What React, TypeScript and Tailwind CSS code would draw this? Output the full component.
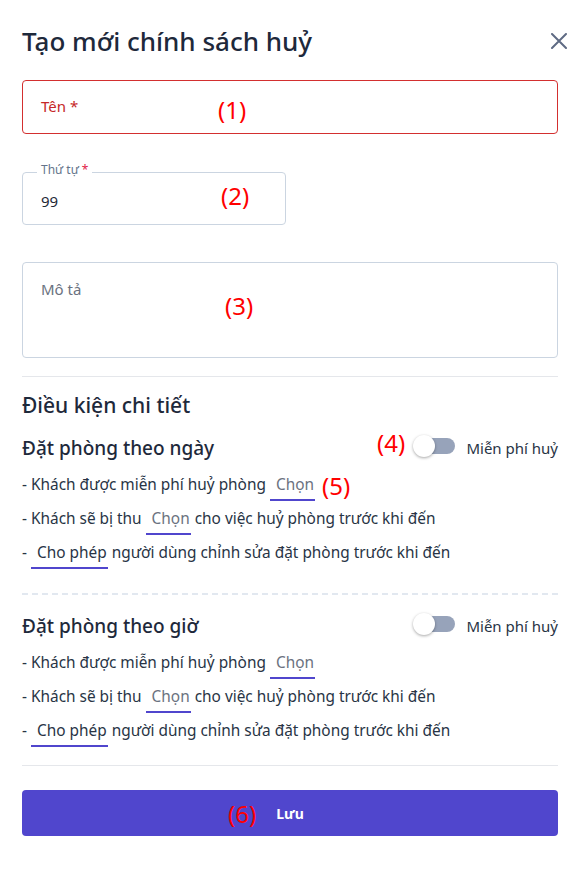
import React from "react";

function Select({ children, dark = false }: { children: React.ReactNode; dark?: boolean }) {
  return (
    <span
      className={`inline-block border-b-2 border-[#5046cd] pb-[4px] pl-[6px] pr-[1px] leading-[20px] ${
        dark ? "text-[#283445]" : "text-[#6b7280]"
      }`}
    >
      {children}
    </span>
  );
}

function Note({ children, className }: { children: React.ReactNode; className: string }) {
  return (
    <span
      className={`pointer-events-none absolute text-[24px] font-normal leading-[30px] text-[#ff0000] ${className}`}
    >
      {children}
    </span>
  );
}

function Switch() {
  return (
    <div className="relative h-[22px] w-[42px] shrink-0">
      <div className="absolute left-[5px] right-0 top-[3px] h-[16px] rounded-full bg-[#97a3ba]" />
      <div className="absolute left-0 top-0 h-[22px] w-[22px] rounded-full bg-white shadow-[0_1px_3px_rgba(0,0,0,0.35)]" />
    </div>
  );
}

function Section({ title, note }: { title: string; note?: boolean }) {
  return (
    <div>
      <div className="relative flex h-[26px] items-center justify-between">
        <h3 className="text-[19px] font-medium leading-[26px] text-[#1e293b]">{title}</h3>
        {note && <Note className="left-[355px] top-[-7px]">(4)</Note>}
        <div className="flex items-center gap-[11px]">
          <div className="-mt-[5px]">
            <Switch />
          </div>
          <span className="text-[15px] leading-[20px] text-[#283445]">Miễn phí huỷ</span>
        </div>
      </div>
      <div className="mt-[7px] text-[15.4px] text-[#283445]">
        <div className="relative h-[34px] leading-[34px]">
          - Khách được miễn phí huỷ phòng <Select>Chọn</Select>
          {note && <Note className="left-[300px] top-[3px]">(5)</Note>}
        </div>
        <div className="h-[34px] leading-[34px]">
          - Khách sẽ bị thu <Select>Chọn</Select> cho việc huỷ phòng trước khi đến
        </div>
        <div className="h-[34px] leading-[34px]">
          - <Select dark>Cho phép</Select> người dùng chỉnh sửa đặt phòng trước khi đến
        </div>
      </div>
    </div>
  );
}

export default function App() {
  return (
    <div className="min-h-[869px] w-full bg-white px-[22px] pt-[23px] font-['Noto_Sans',sans-serif] text-[#283445]">
      <div className="flex h-[36px] items-center justify-between">
        <h1 className="text-[26px] font-medium leading-[36px] text-[#1e293b]">Tạo mới chính sách huỷ</h1>
        <svg width="16" height="16" viewBox="0 0 16 16" className="-mr-[9px]" fill="none">
          <path d="M1 1 L15 15 M15 1 L1 15" stroke="#5f6b84" strokeWidth="2" strokeLinecap="round" />
        </svg>
      </div>

      <div className="relative mt-[21px] h-[54px] rounded-[4px] border border-[#d32f2f] px-[18px] pt-[13px]">
        <span className="text-[15px] leading-[20px] text-[#c62828]">Tên *</span>
        <Note className="left-[195px] top-[14px]">(1)</Note>
      </div>

      <div className="relative mt-[38px] h-[53px] w-[264px] rounded-[4px] border border-[#cbd5e1] px-[18px] pt-[16px]">
        <span className="absolute left-[14px] top-[-10px] bg-white px-[4px] text-[12px] leading-[14px] text-[#64748b]">
          Thứ tự <span className="text-[#e11d48]">*</span>
        </span>
        <span className="text-[15px] leading-[20px] text-[#1f2937]">99</span>
        <Note className="left-[198px] top-[8px]">(2)</Note>
      </div>

      <div className="relative mt-[37px] h-[96px] rounded-[4px] border border-[#cbd5e1] px-[18px] pt-[14px]">
        <span className="text-[15px] leading-[20px] text-[#6b7280]">Mô tả</span>
        <Note className="left-[202px] top-[28px]">(3)</Note>
      </div>

      <div className="mt-[18px] h-px bg-[#e5e7eb]" />

      <h2 className="mt-[14px] text-[21px] font-medium leading-[28px] text-[#1e293b]">Điều kiện chi tiết</h2>

      <div className="mt-[16px]">
        <Section title="Đặt phòng theo ngày" note />
      </div>

      <div className="mt-[23px] border-t-2 border-dashed border-[#e2e8f0]" />

      <div className="mt-[18px]">
        <Section title="Đặt phòng theo giờ" />
      </div>

      <div className="mt-[17px] h-px bg-[#e5e7eb]" />

      <button className="relative mt-[24px] flex h-[46px] w-full items-center justify-center rounded-[4px] bg-[#5046cd] text-[14px] font-bold text-white">
        Lưu
        <Note className="left-[206px] top-[9px]">(6)</Note>
      </button>
    </div>
  );
}
